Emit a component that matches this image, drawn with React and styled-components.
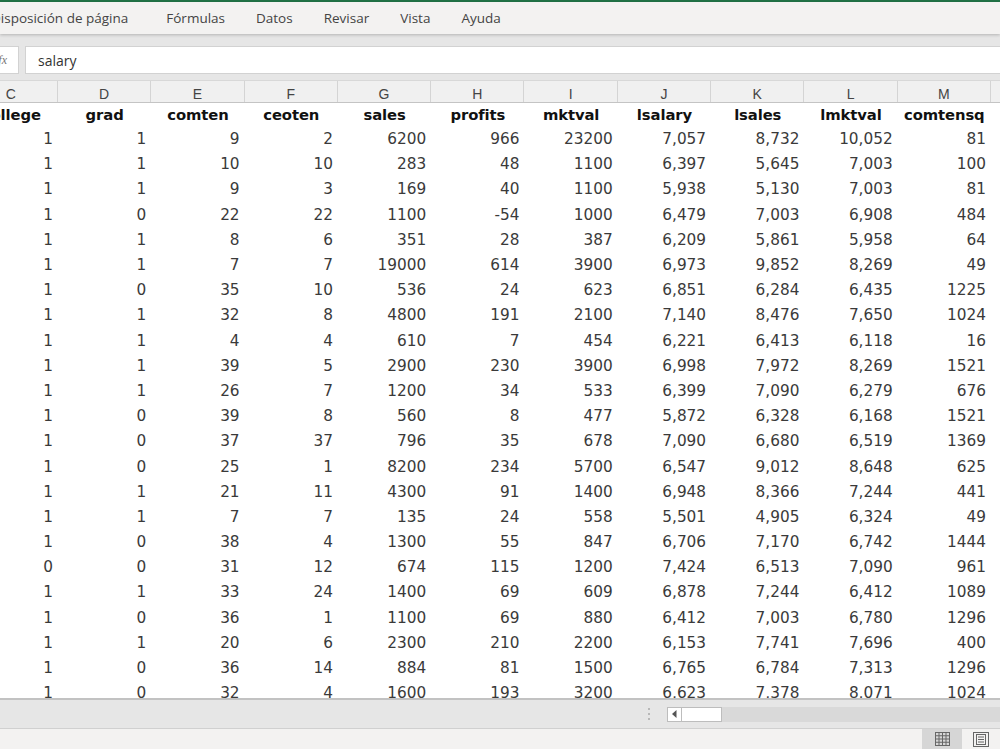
import React from "react";
import styled, { createGlobalStyle } from "styled-components";

const GlobalStyle = createGlobalStyle`
  html, body { margin: 0; padding: 0; background: #fff; }
  body { width: 1000px; height: 749px; overflow: hidden; }
  #root { width: 1000px; height: 749px; }
`;

const COLW = 93.3;
const COLS = `repeat(13, ${COLW}px)`;

const Window = styled.div`
  width: 1000px;
  height: 749px;
  display: flex;
  flex-direction: column;
  overflow: hidden;
  background: #fff;
`;

const TopLine = styled.div`
  height: 2px;
  flex: none;
  background: #217346;
`;

const MenuBar = styled.nav`
  height: 32px;
  flex: none;
  display: flex;
  align-items: center;
  gap: 31px;
  background: #f3f2f1;
  font-family: "Open Sans", "Noto Sans", sans-serif;
  font-size: 13.5px;
  color: #444;
  box-shadow: 0 1px 3px rgba(0, 0, 0, 0.22);
  position: relative;
  z-index: 2;
  white-space: nowrap;
`;

const MenuItem = styled.span`
  margin-left: ${(p) => (p.$first ? "-9px" : "0")};
  margin-right: ${(p) => (p.$first ? "7px" : "0")};
`;

const FormulaArea = styled.div`
  height: 46px;
  flex: none;
  display: flex;
  gap: 6px;
  padding: 12px 0 6px 0;
  box-sizing: border-box;
  background: #e6e6e6;
`;

const FxBox = styled.div`
  width: 19px;
  flex: none;
  display: flex;
  align-items: center;
  justify-content: flex-end;
  padding-right: 11px;
  box-sizing: border-box;
  overflow: hidden;
  background: #fff;
  border: 1px solid #d2d2d2;
  border-left: none;
  font-family: "Liberation Serif", serif;
  font-style: italic;
  font-size: 12px;
  color: #777;
`;

const FormulaInput = styled.div`
  flex: 1;
  display: flex;
  align-items: center;
  padding-left: 12px;
  background: #fff;
  border: 1px solid #d2d2d2;
  border-right: none;
  font-family: "Open Sans", "Noto Sans", sans-serif;
  font-size: 14px;
  color: #333;
`;

const SheetClip = styled.div`
  flex: 1;
  overflow: hidden;
  display: flex;
  flex-direction: column;
`;

const Grid = styled.div`
  margin-left: -35.3px;
  display: flex;
  flex-direction: column;
`;

const ColHeaderRow = styled.div`
  display: grid;
  grid-template-columns: ${COLS};
  height: 23px;
  flex: none;
  background: #f0f0f0;
  border-bottom: 1px solid #c4c4c4;
  box-sizing: border-box;
  border-top: 1px solid #d8d8d8;
`;

const ColLetter = styled.div`
  display: flex;
  align-items: center;
  justify-content: center;
  padding-top: 4px;
  border-right: 1px solid #d4d4d4;
  font-family: "Liberation Sans", Arial, sans-serif;
  font-size: 14px;
  color: #444;
`;

const Row = styled.div`
  display: grid;
  grid-template-columns: ${COLS};
  height: ${(p) => (p.$title ? "23px" : "25.2px")};
  flex: none;
  align-items: center;
`;

const TitleCell = styled.div`
  text-align: center;
  white-space: nowrap;
  font-family: "DejaVu Sans", sans-serif;
  font-weight: bold;
  font-size: 14.8px;
  letter-spacing: -0.1px;
  color: #111;
`;

const Cell = styled.div`
  text-align: right;
  padding-right: 5px;
  white-space: nowrap;
  font-family: "DejaVu Sans", sans-serif;
  font-size: 15.3px;
  color: #3a3a3a;
  padding-top: 1px;
`;

const ScrollArea = styled.div`
  height: 31px;
  flex: none;
  box-sizing: border-box;
  border-top: 2px solid #c2c2c2;
  border-bottom: 1px solid #d0d0d0;
  background: #e6e6e6;
  display: flex;
  align-items: center;
  padding-left: 648px;
`;

const Dots = styled.div`
  width: 3px;
  display: flex;
  flex-direction: column;
  gap: 3px;
  margin-right: 16px;
`;

const Dot = styled.span`
  width: 2px;
  height: 2px;
  border-radius: 1px;
  background: #a8a8a8;
`;

const Track = styled.div`
  flex: 1;
  height: 15px;
  display: flex;
  background: #d9d9d9;
`;

const ArrowBtn = styled.div`
  width: 15px;
  height: 15px;
  box-sizing: border-box;
  background: #fff;
  border: 1px solid #bdbdbd;
  display: flex;
  align-items: center;
  justify-content: center;
`;

const Thumb = styled.div`
  width: 40px;
  height: 15px;
  box-sizing: border-box;
  background: #fff;
  border: 1px solid #bdbdbd;
  border-left: none;
`;

const StatusBar = styled.div`
  height: 20px;
  flex: none;
  background: #f3f2f1;
  display: flex;
  justify-content: flex-end;
`;

const ViewBtn = styled.div`
  width: ${(p) => p.$w}px;
  height: 20px;
  display: flex;
  align-items: center;
  justify-content: center;
  background: ${(p) => (p.$active ? "#d6d6d6" : "transparent")};
`;

const letters = ["C", "D", "E", "F", "G", "H", "I", "J", "K", "L", "M", "N", "O"];
const titles = [
  "college", "grad", "comten", "ceoten", "sales", "profits", "mktval",
  "lsalary", "lsales", "lmktval", "comtensq", "ceotensq", "",
];

const data = [
  "1 1 9 2 6200 966 23200 7,057 8,732 10,052 81",
  "1 1 10 10 283 48 1100 6,397 5,645 7,003 100",
  "1 1 9 3 169 40 1100 5,938 5,130 7,003 81",
  "1 0 22 22 1100 -54 1000 6,479 7,003 6,908 484",
  "1 1 8 6 351 28 387 6,209 5,861 5,958 64",
  "1 1 7 7 19000 614 3900 6,973 9,852 8,269 49",
  "1 0 35 10 536 24 623 6,851 6,284 6,435 1225",
  "1 1 32 8 4800 191 2100 7,140 8,476 7,650 1024",
  "1 1 4 4 610 7 454 6,221 6,413 6,118 16",
  "1 1 39 5 2900 230 3900 6,998 7,972 8,269 1521",
  "1 1 26 7 1200 34 533 6,399 7,090 6,279 676",
  "1 0 39 8 560 8 477 5,872 6,328 6,168 1521",
  "1 0 37 37 796 35 678 7,090 6,680 6,519 1369",
  "1 0 25 1 8200 234 5700 6,547 9,012 8,648 625",
  "1 1 21 11 4300 91 1400 6,948 8,366 7,244 441",
  "1 1 7 7 135 24 558 5,501 4,905 6,324 49",
  "1 0 38 4 1300 55 847 6,706 7,170 6,742 1444",
  "0 0 31 12 674 115 1200 7,424 6,513 7,090 961",
  "1 1 33 24 1400 69 609 6,878 7,244 6,412 1089",
  "1 0 36 1 1100 69 880 6,412 7,003 6,780 1296",
  "1 1 20 6 2300 210 2200 6,153 7,741 7,696 400",
  "1 0 36 14 884 81 1500 6,765 6,784 7,313 1296",
  "1 0 32 4 1600 193 3200 6,623 7,378 8,071 1024",
].map((r) => r.split(" "));

const GridIcon = () => (
  <svg width="15" height="14" viewBox="0 0 15 14">
    <g fill="none" stroke="#666" strokeWidth="1">
      <rect x="0.5" y="0.5" width="14" height="13" />
      <line x1="4" y1="0.5" x2="4" y2="13.5" />
      <line x1="7.5" y1="0.5" x2="7.5" y2="13.5" />
      <line x1="11" y1="0.5" x2="11" y2="13.5" />
      <line x1="0.5" y1="3.75" x2="14.5" y2="3.75" />
      <line x1="0.5" y1="7" x2="14.5" y2="7" />
      <line x1="0.5" y1="10.25" x2="14.5" y2="10.25" />
    </g>
  </svg>
);

const PageIcon = () => (
  <svg width="16" height="15" viewBox="0 0 16 15">
    <g fill="none" stroke="#666" strokeWidth="1">
      <rect x="0.5" y="0.5" width="15" height="14" />
      <rect x="3.5" y="2.5" width="9" height="10" />
      <line x1="5" y1="5" x2="11" y2="5" />
      <line x1="5" y1="7.5" x2="11" y2="7.5" />
      <line x1="5" y1="10" x2="11" y2="10" />
    </g>
  </svg>
);

export default function App() {
  const menu = ["Disposición de página", "Fórmulas", "Datos", "Revisar", "Vista", "Ayuda"];
  return (
    <Window>
      <GlobalStyle />
      <TopLine />
      <MenuBar>
        {menu.map((m, i) => (
          <MenuItem key={m} $first={i === 0}>{m}</MenuItem>
        ))}
      </MenuBar>
      <FormulaArea>
        <FxBox>fx</FxBox>
        <FormulaInput>salary</FormulaInput>
      </FormulaArea>
      <SheetClip>
        <Grid>
          <ColHeaderRow>
            {letters.map((l) => (
              <ColLetter key={l}>{l}</ColLetter>
            ))}
          </ColHeaderRow>
          <Row $title>
            {titles.map((t, i) => (
              <TitleCell key={i}>{t}</TitleCell>
            ))}
          </Row>
          {data.map((r, ri) => (
            <Row key={ri}>
              {r.map((v, ci) => (
                <Cell key={ci}>{v}</Cell>
              ))}
              <Cell />
              <Cell />
            </Row>
          ))}
        </Grid>
      </SheetClip>
      <ScrollArea>
        <Dots>
          <Dot />
          <Dot />
          <Dot />
        </Dots>
        <Track>
          <ArrowBtn>
            <svg width="5" height="8" viewBox="0 0 5 8">
              <path d="M4.5 0 L0 4 L4.5 8 Z" fill="#555" />
            </svg>
          </ArrowBtn>
          <Thumb />
        </Track>
      </ScrollArea>
      <StatusBar>
        <ViewBtn $active $w={40}>
          <GridIcon />
        </ViewBtn>
        <ViewBtn $w={38}>
          <PageIcon />
        </ViewBtn>
      </StatusBar>
    </Window>
  );
}
